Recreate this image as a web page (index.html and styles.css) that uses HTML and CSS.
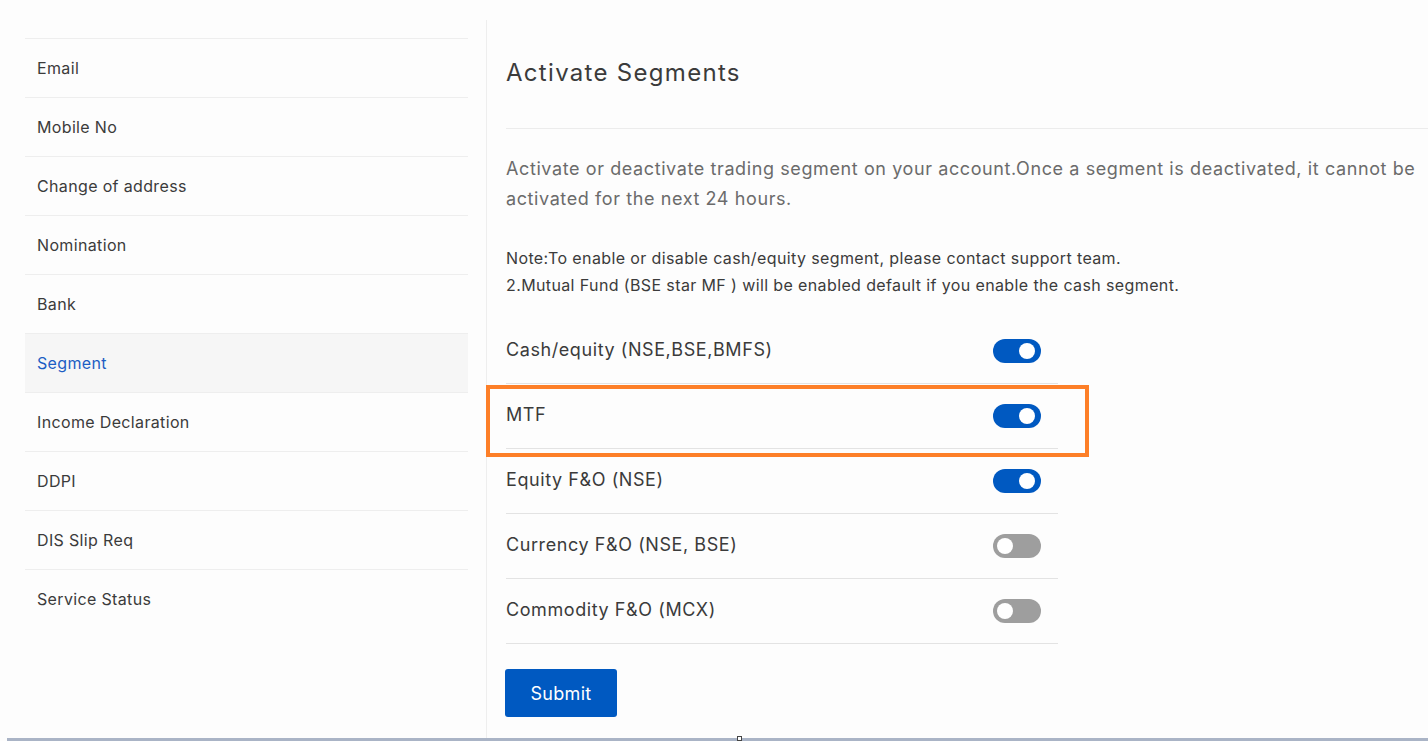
FILE: index.html
```html
<!DOCTYPE html>
<html lang="en">

<head>
    <meta charset="UTF-8">
    <meta name="viewport" content="width=device-width, initial-scale=1.0">
    <title>Activate Segments</title>

    <link rel="stylesheet" href="styles.css">
</head>

<body>
    <div class="page">
        <ul class="side-menu">
            <li>Email</li>
            <li>Mobile No</li>
            <li>Change of address</li>
            <li>Nomination</li>
            <li>Bank</li>
            <li class="active">Segment</li>
            <li>Income Declaration</li>
            <li>DDPI</li>
            <li>DIS Slip Req</li>
            <li>Service Status</li>
        </ul>

        <div class="content">
            <h2 class="content-title">Activate Segments</h2>
            <hr>
            <p class="content-desc">
                Activate or deactivate trading segment on your account.Once a segment is deactivated, it cannot be
                activated for the next 24 hours.
            </p>
            <p class="content-note">
                Note:To enable or disable cash/equity segment, please contact support team.<br>
                2.Mutual Fund (BSE star MF ) will be enabled default if you enable the cash segment.
            </p>

            <div class="segment-list">
                <div class="segment-row">
                    <span>Cash/equity (NSE,BSE,BMFS)</span>
                    <span class="toggle on"></span>
                </div>
                <div class="segment-row highlight">
                    <span>MTF</span>
                    <span class="toggle on"></span>
                </div>
                <div class="segment-row">
                    <span>Equity F&amp;O (NSE)</span>
                    <span class="toggle on"></span>
                </div>
                <div class="segment-row">
                    <span>Currency F&amp;O (NSE, BSE)</span>
                    <span class="toggle"></span>
                </div>
                <div class="segment-row">
                    <span>Commodity F&amp;O (MCX)</span>
                    <span class="toggle"></span>
                </div>
            </div>

            <button class="submit-btn">Submit</button>
        </div>
    </div>

    <div class="bottom-bar"><span class="bottom-mark"></span></div>
</body>

</html>
```

FILE: styles.css
```css
* {
    box-sizing: border-box;
}

body {
    margin: 0;
    background-color: #fdfdfd;
    font-family: Inter, "Noto Sans", sans-serif;
    color: #3b3b3b;
}

.page {
    display: flex;
    align-items: flex-start;
}

.side-menu {
    list-style: none;
    margin: 38px 18px 0 25px;
    padding: 0;
    width: 443px;
    flex-shrink: 0;
}

.side-menu li {
    height: 59px;
    border-top: 1px solid #eeeeee;
    padding: 0 12px 1px 12px;
    display: flex;
    align-items: center;
    font-size: 16px;
    letter-spacing: 0.35px;
}

.side-menu li.active {
    background-color: #f6f6f6;
    color: #1d5ec4;
}

.content {
    flex: 1;
    margin-top: 20px;
    min-height: 721px;
    border-left: 1px solid #eeeeee;
    padding: 38px 0 0 19px;
}

.content-title {
    margin: 0;
    font-size: 24px;
    line-height: 30px;
    font-weight: 400;
    letter-spacing: 1.3px;
    color: #3b3b3b;
}

hr {
    border: none;
    border-top: 1px solid #ececec;
    margin: 40px 0 0 0;
}

.content-desc {
    margin: 25px 0 0 0;
    font-size: 18px;
    line-height: 30px;
    letter-spacing: 0.6px;
    color: #6b6b6b;
}

.content-note {
    margin: 31px 0 0 0;
    font-size: 16px;
    line-height: 27px;
    letter-spacing: 0.38px;
    color: #3b3b3b;
}

.segment-list {
    width: 552px;
    margin-top: 20px;
}

.segment-row {
    position: relative;
    height: 65px;
    border-bottom: 1px solid #e3e3e3;
    padding: 0 17px 0 0;
    display: flex;
    align-items: center;
    justify-content: space-between;
    font-size: 18px;
    letter-spacing: 0.58px;
}

.segment-row span:first-child {
    margin-top: -3px;
}

.segment-row.highlight::after {
    content: "";
    position: absolute;
    left: -20px;
    right: -31px;
    top: 1px;
    bottom: -9px;
    border: 4px solid #fd7f28;
}

.toggle {
    position: relative;
    width: 48px;
    height: 24px;
    border-radius: 12px;
    background-color: #9e9e9e;
}

.toggle::after {
    content: "";
    position: absolute;
    top: 4px;
    left: 4px;
    width: 16px;
    height: 16px;
    border-radius: 50%;
    background-color: #ffffff;
}

.toggle.on {
    background-color: #0059c1;
}

.toggle.on::after {
    left: 26px;
}

.submit-btn {
    margin: 25px 0 0 -1px;
    width: 112px;
    height: 48px;
    border: none;
    border-radius: 3px;
    background-color: #0059c1;
    color: #ffffff;
    font-family: Inter, "Noto Sans", sans-serif;
    font-size: 18px;
    letter-spacing: 0.3px;
    cursor: pointer;
}

.bottom-bar {
    position: fixed;
    left: 7px;
    right: 0;
    bottom: 0;
    height: 3px;
    background-color: #aab4c6;
}

.bottom-mark {
    position: absolute;
    left: 730px;
    bottom: 0;
    width: 5px;
    height: 5px;
    border: 1px solid #444444;
    background-color: #ffffff;
}
```
